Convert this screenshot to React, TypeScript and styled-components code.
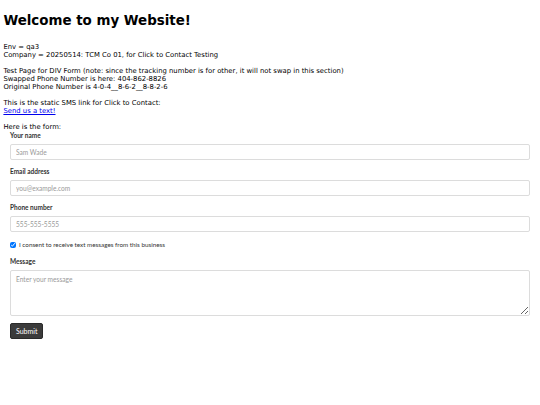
import React from "react";
import styled, { createGlobalStyle } from "styled-components";

const Global = createGlobalStyle`
  html, body { background: #fff; }
  body {
    margin: 3.4px;
    font-family: "DejaVu Sans", Verdana, sans-serif;
    font-size: 6.85px;
    line-height: 8px;
    color: #000;
  }
`;

const Title = styled.h1`
  font-family: "DejaVu Sans", Verdana, sans-serif;
  font-size: 13.4px;
  line-height: 16px;
  font-weight: bold;
  margin: 9.6px 0 14px;
`;

const Line = styled.div``;

const Gap = styled.div`
  height: 8px;
`;

const Link = styled.a`
  color: #0000ee;
  text-decoration: underline;
`;

const Form = styled.form`
  padding: 1px 6.6px 0;
  display: flex;
  flex-direction: column;
  font-family: "Lato", "Open Sans", sans-serif;
  color: #333;
`;

const Field = styled.div`
  display: flex;
  flex-direction: column;
  gap: 4px;
  margin-bottom: 8px;
`;

const Label = styled.label`
  font-size: 6.5px;
  line-height: 8px;
  font-weight: bold;
  color: #333;
`;

const Input = styled.input`
  box-sizing: border-box;
  width: 100%;
  height: 16px;
  border: 1px solid #dcdcdc;
  border-radius: 2px;
  padding: 0 5px;
  font-family: "Lato", sans-serif;
  font-size: 6.6px;
  color: #333;
  &::placeholder { color: #9a9a9a; }
`;

const Area = styled.textarea`
  box-sizing: border-box;
  width: 100%;
  height: 46px;
  border: 1px solid #dcdcdc;
  border-radius: 2px;
  padding: 4px 5px;
  font-family: "Lato", sans-serif;
  font-size: 6.6px;
  color: #333;
  resize: vertical;
  &::placeholder { color: #9a9a9a; }
`;

const ConsentRow = styled.label`
  display: flex;
  align-items: center;
  gap: 3px;
  font-size: 6.3px;
  line-height: 8px;
  color: #333;
  margin: 1px 0 9px;
`;

const Check = styled.input`
  width: 6px;
  height: 6px;
  margin: 0;
`;

const Submit = styled.button`
  align-self: flex-start;
  margin-top: -1px;
  height: 16px;
  padding: 0 5px;
  background: #3b3b3b;
  color: #fff;
  border: 1px solid #2a2a2a;
  border-radius: 2px;
  font-family: "Lato", sans-serif;
  font-size: 7px;
  font-weight: normal;
`;

export default function App() {
  return (
    <>
      <Global />
      <Title>Welcome to my Website!</Title>
      <Line>Env = qa3</Line>
      <Line>Company = 20250514: TCM Co 01, for Click to Contact Testing</Line>
      <Gap />
      <Line>Test Page for DIV Form (note: since the tracking number is for other, it will not swap in this section)</Line>
      <Line>Swapped Phone Number is here: 404-862-8826</Line>
      <Line>Original Phone Number is 4-0-4__8-6-2__8-8-2-6</Line>
      <Gap />
      <Line>This is the static SMS link for Click to Contact:</Line>
      <Line><Link href="#">Send us a text!</Link></Line>
      <Gap />
      <Line>Here is the form:</Line>
      <Form onSubmit={(e) => e.preventDefault()}>
        <Field>
          <Label>Your name</Label>
          <Input placeholder="Sam Wade" />
        </Field>
        <Field>
          <Label>Email address</Label>
          <Input placeholder="you@example.com" />
        </Field>
        <Field>
          <Label>Phone number</Label>
          <Input placeholder="555-555-5555" />
        </Field>
        <ConsentRow>
          <Check type="checkbox" defaultChecked />
          I consent to receive text messages from this business
        </ConsentRow>
        <Field>
          <Label>Message</Label>
          <Area placeholder="Enter your message" />
        </Field>
        <Submit type="submit">Submit</Submit>
      </Form>
    </>
  );
}
